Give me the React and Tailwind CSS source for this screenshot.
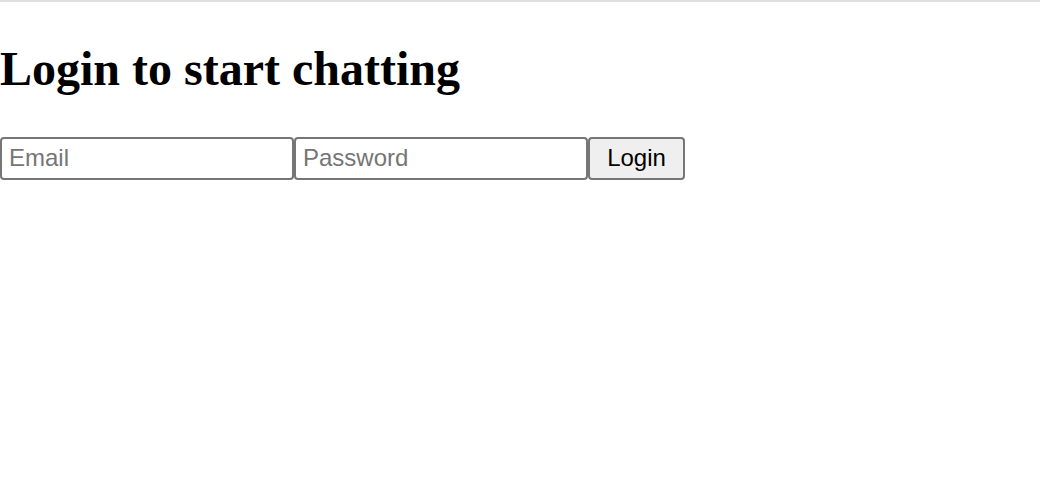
import React, { useState } from "react";

const App = () => {
  const [email, setEmail] = useState("");
  const [password, setPassword] = useState("");

  return (
    <div className="min-h-screen bg-white">
      <div className="h-[2px] bg-[#e0e0e0]" />
      <h1 className="mt-[39px] mb-[41px] text-[48px] leading-[1.15] font-bold text-black font-['Liberation_Serif',serif]">
        Login to start chatting
      </h1>
      <form className="flex font-['Liberation_Sans',Arial,sans-serif]" onSubmit={(e) => e.preventDefault()}>
        <input
          type="email"
          placeholder="Email"
          className="w-[294px] h-[43px] px-[7px] pb-[2px] border-2 border-[#767676] rounded-[4px] text-[24px] text-black placeholder:text-[#757575] outline-none"
          value={email}
          onChange={(e) => setEmail(e.target.value)}
        />
        <input
          type="password"
          placeholder="Password"
          className="w-[294px] h-[43px] px-[7px] pb-[2px] border-2 border-[#767676] rounded-[4px] text-[24px] text-black placeholder:text-[#757575] outline-none"
          value={password}
          onChange={(e) => setPassword(e.target.value)}
        />
        <button
          type="submit"
          className="w-[97px] h-[43px] pb-[2px] border-2 border-[#767676] rounded-[4px] bg-[#efefef] text-[24px] text-black"
        >
          Login
        </button>
      </form>
    </div>
  );
};

export default App;
